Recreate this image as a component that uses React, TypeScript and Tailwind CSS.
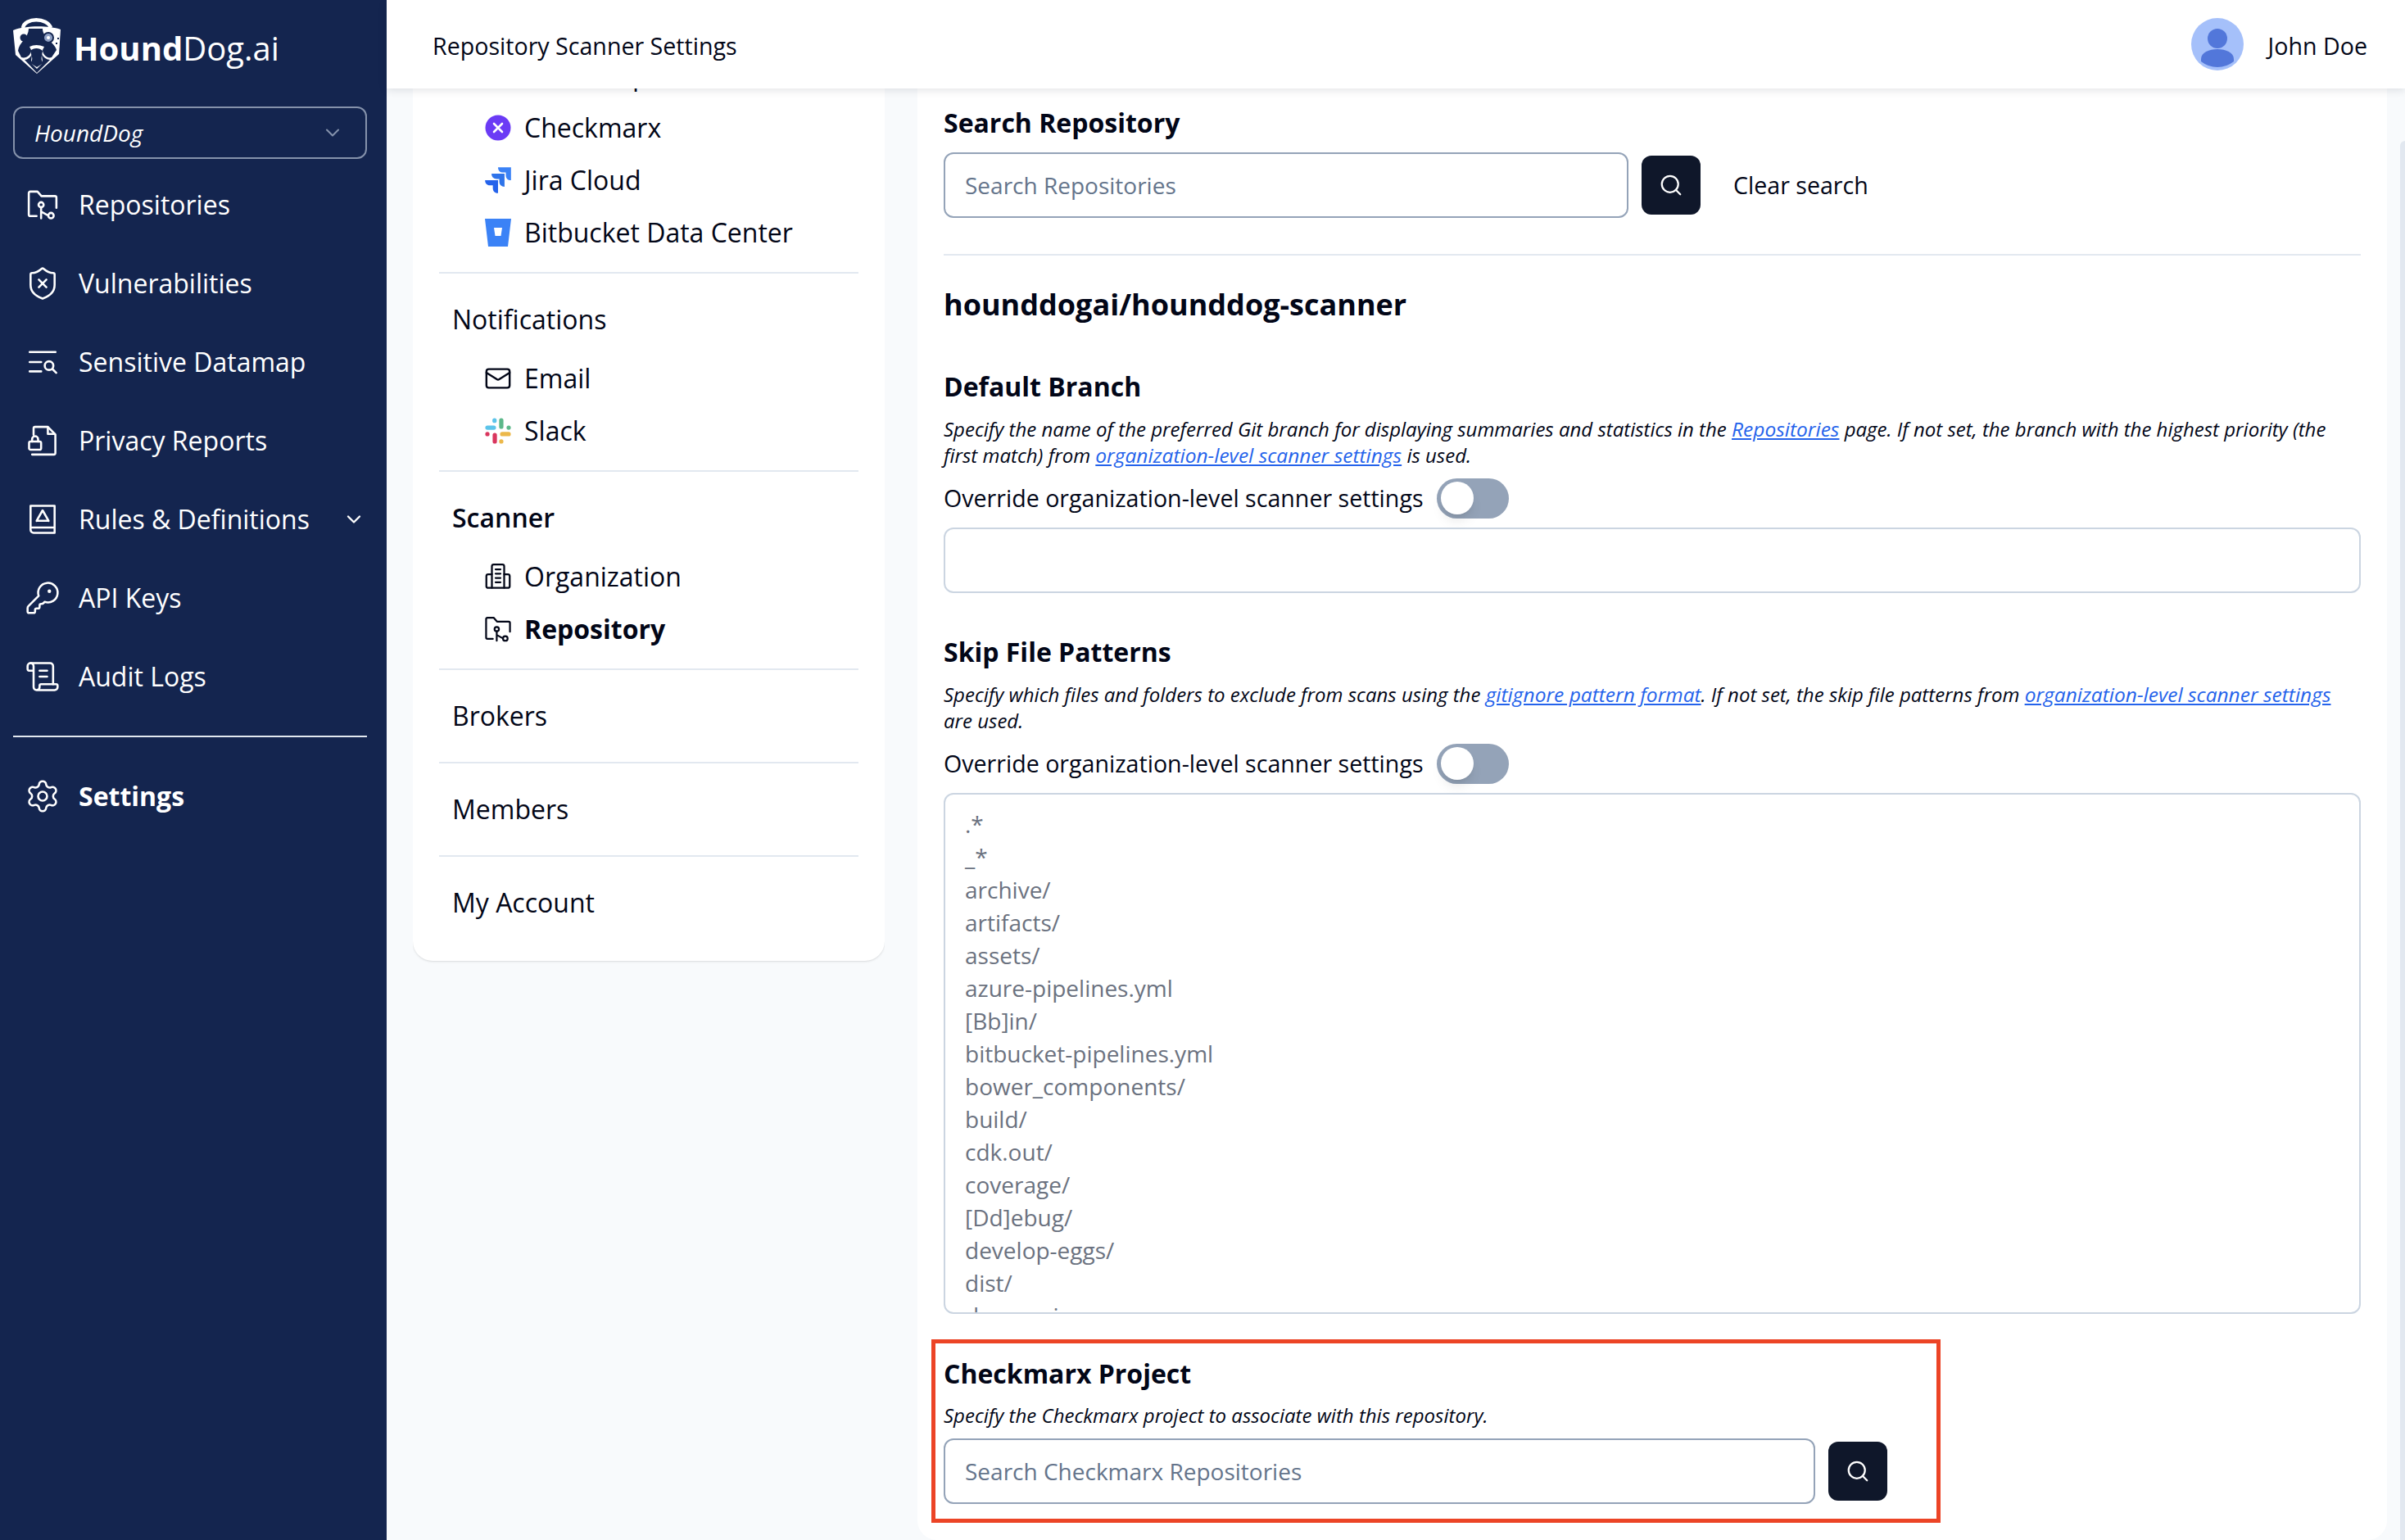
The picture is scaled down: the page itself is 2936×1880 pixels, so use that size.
import { ChevronDown, KeyRound, Mail, ScrollText, Search, Settings, ShieldX } from 'lucide-react'
import type { ReactNode } from 'react'

const SKIP_PATTERNS = [
  '.*', '_*', 'archive/', 'artifacts/', 'assets/', 'azure-pipelines.yml', '[Bb]in/',
  'bitbucket-pipelines.yml', 'bower_components/', 'build/', 'cdk.out/', 'coverage/',
  '[Dd]ebug/', 'develop-eggs/', 'dist/', 'dummy.json',
]

function Logo() {
  return (
    <svg width="60" height="78" viewBox="0 0 60 78" fill="none">
      <path d="M13 14C15 1 43 1 47 14" stroke="white" strokeWidth="4.5" />
      <path d="M1 17C16 11 44 11 59 16L57 46L30 70L4 47Z" fill="white" />
      <path d="M20 15H37C37 26 52 32 54 41L48 50C42 52 37 46 37 41L39 37Q29 33 21 37L23 41C23 47 17 52 11 50L7 42C8 32 20 26 20 15Z" fill="#14254f" />
      <path d="M22 42C26 38 33 38 37 42C36 50 34 52 38 57L30 62L22 57C26 52 24 50 22 42Z" fill="#14254f" />
      <path d="M15 53C19 53 22 50 24 46C24 51 22 54 24 58L30 64L36 58C38 54 36 51 36 46C38 50 42 53 46 53L30 69Z" fill="#14254f" />
      <circle cx="14" cy="26" r="4.5" fill="#14254f" />
      <circle cx="44" cy="26" r="6" fill="#8fa0c4" stroke="#14254f" strokeWidth="2" />
      <circle cx="44" cy="26" r="2" fill="white" />
      <rect x="55" y="26" width="2" height="2" fill="#14254f" />
      <rect x="53" y="32" width="2" height="2" fill="#14254f" />
    </svg>
  )
}

function FolderKeyIcon({ size }: { size: number }) {
  return (
    <svg className="shrink-0" width={size} height={size} viewBox="0 0 24 24" fill="none" stroke="currentColor" strokeWidth="1.4" strokeLinecap="round" strokeLinejoin="round">
      <path d="M8 19.500H3.800a1 1 0 0 1-1-1V4.200a1 1 0 0 1 1-1h4.800l2.600 3h9a1 1 0 0 1 1 1V14" />
      <circle cx="11" cy="12" r="1.700" />
      <path d="M11 13.700V21M11 16.500l4 2.200" />
      <circle cx="17.600" cy="19.200" r="1.800" />
    </svg>
  )
}

function DatamapIcon({ size }: { size: number }) {
  return (
    <svg className="shrink-0" width={size} height={size} viewBox="0 0 24 24" fill="none" stroke="currentColor" strokeWidth="1.500" strokeLinecap="round">
      <path d="M3 5h18M3 12h8M3 18.500h8" />
      <circle cx="16.500" cy="14.500" r="3" />
      <path d="M19 17l2.500 2.500" />
    </svg>
  )
}

function FileLockIcon({ size }: { size: number }) {
  return (
    <svg className="shrink-0" width={size} height={size} viewBox="0 0 24 24" fill="none" stroke="currentColor" strokeWidth="1.400" strokeLinecap="round" strokeLinejoin="round">
      <path d="M6 8V3.800a1 1 0 0 1 1-1h8.500l5 5v12.400a1 1 0 0 1-1 1H5" />
      <path d="M15.500 3v4.500H20" />
      <rect x="3" y="12.500" width="8" height="5.500" rx="1" />
      <path d="M5 12.500v-1.500a2 2 0 0 1 4 0v1.500" />
    </svg>
  )
}

function BookIcon({ size }: { size: number }) {
  return (
    <svg className="shrink-0" width={size} height={size} viewBox="0 0 24 24" fill="none" stroke="currentColor" strokeWidth="1.400" strokeLinecap="round" strokeLinejoin="round">
      <path d="M4 19V3h16v18H6a2 2 0 0 1-2-2ZM4.500 17.500H20" />
      <path d="M8 13l4-7 4 7M9 13h6" />
    </svg>
  )
}

function BuildingIcon({ size }: { size: number }) {
  return (
    <svg className="shrink-0" width={size} height={size} viewBox="0 0 24 24" fill="none" stroke="currentColor" strokeWidth="1.500" strokeLinecap="round" strokeLinejoin="round">
      <path d="M7 21V3.500A1.500 1.500 0 0 1 8.500 2h7A1.500 1.500 0 0 1 17 3.500V21" />
      <path d="M7 10H4a1.500 1.500 0 0 0-1.500 1.500V20A1.200 1.200 0 0 0 4 21h16a1.200 1.200 0 0 0 1.500-1v-8.500A1.500 1.500 0 0 0 20 10h-3" />
      <path d="M10 6h4M10 9.500h4M10 13h4M10 16.500h4" />
    </svg>
  )
}

function CheckmarxIcon() {
  return (
    <svg className="shrink-0" width="32" height="32" viewBox="0 0 32 32">
      <circle cx="16" cy="16" r="15.500" fill="#6b3bf5" />
      <path d="M11 11l10 10M21 11l-10 10" stroke="white" strokeWidth="2.600" strokeLinecap="round" />
    </svg>
  )
}

function JiraIcon() {
  const blade = 'M12 2h10v10c-2.500 0-4-1.500-4-4V6h-2c-2.500 0-4-1.500-4-4z'
  return (
    <svg className="shrink-0" width="38" height="38" viewBox="0 0 24 24">
      <path d={blade} fill="#3b82f6" />
      <path d={blade} fill="#2f74ea" transform="translate(-5 5)" />
      <path d={blade} fill="#2563eb" transform="translate(-10 10)" />
    </svg>
  )
}

function BitbucketIcon() {
  return (
    <svg className="shrink-0" width="32" height="34" viewBox="0 0 32 34">
      <path fillRule="evenodd" d="M0 0H32L28 34H4ZM11 11l1.500 10h7L21 11Z" fill="#3b82f6" />
    </svg>
  )
}

function SlackIcon() {
  return (
    <svg className="shrink-0" width="38" height="38" viewBox="0 0 24 24" fill="none" strokeWidth="3.300" strokeLinecap="round">
      <g stroke="#5cc4ea"><path d="M3.800 9.500h5M9.300 3.800v.4" /></g>
      <g stroke="#5cb88a"><path d="M14.500 3.800v5M20.200 9.500h.01" /></g>
      <g stroke="#ecb84a"><path d="M15.200 14.500h5M14.500 20.200v.01" /></g>
      <g stroke="#d9365e"><path d="M9.500 15.200v5M3.800 14.500h.01" /></g>
    </svg>
  )
}

function SideItem({ icon, label, bold, chevron }: { icon: ReactNode; label: string; bold?: boolean; chevron?: boolean }) {
  return (
    <div className="flex h-[96px] items-center pl-[32px] pr-[26px]">
      <span className="flex w-[40px] justify-center text-white">{icon}</span>
      <span className={`ml-[24px] text-[32px] text-white ${bold ? 'font-bold' : ''}`}>{label}</span>
      {chevron && <ChevronDown size={28} strokeWidth={2} className="ml-auto text-white" />}
    </div>
  )
}

function NavLink({ icon, label, bold }: { icon: ReactNode; label: string; bold?: boolean }) {
  return (
    <div className="flex h-[64px] items-center pl-[88px]">
      <span className="flex w-[32px] justify-center text-[#020617]">{icon}</span>
      <span className={`ml-[16px] text-[32px] ${bold ? 'font-bold' : ''}`}>{label}</span>
    </div>
  )
}

function NavDivider() {
  return <div className="mx-[32px] h-[2px] bg-[#e2e8f0]" />
}

function NavLabel({ label, bold }: { label: string; bold?: boolean }) {
  return <div className={`flex h-[48px] items-center pl-[48px] text-[32px] ${bold ? 'font-semibold' : ''}`}>{label}</div>
}

function SettingsNav() {
  return (
    <div className="-mt-[48px] w-[576px] rounded-[24px] bg-white pb-[47px] text-[#020617] shadow-sm">
      <NavLink icon={<span className="h-[32px] w-[32px] rounded-full bg-[#2563eb]" />} label="Azure Repos" />
      <NavLink icon={<CheckmarxIcon />} label="Checkmarx" />
      <NavLink icon={<JiraIcon />} label="Jira Cloud" />
      <NavLink icon={<BitbucketIcon />} label="Bitbucket Data Center" />
      <div className="h-[16px]" />
      <NavDivider />
      <div className="pt-[32px]">
        <NavLabel label="Notifications" />
        <div className="h-[16px]" />
        <NavLink icon={<Mail size={34} strokeWidth={1.7} className="shrink-0" />} label="Email" />
        <NavLink icon={<SlackIcon />} label="Slack" />
      </div>
      <div className="h-[16px]" />
      <NavDivider />
      <div className="pt-[32px]">
        <NavLabel label="Scanner" bold />
        <div className="h-[16px]" />
        <NavLink icon={<BuildingIcon size={36} />} label="Organization" />
        <NavLink icon={<FolderKeyIcon size={38} />} label="Repository" bold />
      </div>
      <div className="h-[16px]" />
      <NavDivider />
      <div className="py-[32px]"><NavLabel label="Brokers" /></div>
      <NavDivider />
      <div className="py-[32px]"><NavLabel label="Members" /></div>
      <NavDivider />
      <div className="pt-[32px]"><NavLabel label="My Account" /></div>
    </div>
  )
}

function SearchButton() {
  return (
    <button className="flex h-[72px] w-[72px] shrink-0 items-center justify-center rounded-[12px] bg-[#0f172a] text-white">
      <Search size={30} strokeWidth={1.8} />
    </button>
  )
}

function Toggle() {
  return (
    <span className="relative ml-[16px] flex h-[49px] w-[88px] items-center rounded-full bg-[#94a3b8] pl-[5px]">
      <span className="h-[40px] w-[40px] rounded-full bg-white shadow-lg" />
    </span>
  )
}

function OverrideRow() {
  return (
    <div className="mt-[10px] flex h-[52px] items-center text-[28.6px]">
      Override organization-level scanner settings
      <Toggle />
    </div>
  )
}

function SectionTitle({ children }: { children: ReactNode }) {
  return <h3 className="flex h-[48px] items-center text-[32px] font-bold">{children}</h3>
}

function TextLink({ children }: { children: ReactNode }) {
  return <a className="text-[24.5px] text-[#2563eb] underline">{children}</a>
}

function RepoSettings() {
  return (
    <div className="relative h-full w-[1794px] rounded-b-[24px] bg-white px-[32px] pt-[18px] text-[#020617]">
      <SectionTitle>Search Repository</SectionTitle>
      <div className="mt-[12px] flex items-center">
        <div className="flex h-[80px] w-[836px] items-center rounded-[12px] border-2 border-[#94a3b8] px-[24px] text-[28px] text-[#64748b]">Search Repositories</div>
        <span className="ml-[16px]"><SearchButton /></span>
        <span className="ml-[40px] text-[28.6px]">Clear search</span>
      </div>
      <div className="mt-[44px] h-[2px] bg-[#e2e8f0]" />
      <h2 className="mt-[36px] flex h-[48px] items-center text-[36px] font-bold">hounddogai/hounddog-scanner</h2>
      <div className="mt-[52px]"><SectionTitle>Default Branch</SectionTitle></div>
      <p className="mt-[12px] text-[24px] italic leading-[32px]">
        Specify the name of the preferred Git branch for displaying summaries and statistics in the <TextLink>Repositories</TextLink> page. If not set, the branch with the highest priority (the<br />
        first match) from <TextLink>organization-level scanner settings</TextLink> is used.
      </p>
      <OverrideRow />
      <div className="mt-[10px] h-[80px] rounded-[12px] border-2 border-[#cbd5e1]" />
      <div className="mt-[48px]"><SectionTitle>Skip File Patterns</SectionTitle></div>
      <p className="mt-[12px] text-[24px] italic leading-[32px]">
        Specify which files and folders to exclude from scans using the <TextLink>gitignore pattern format</TextLink>. If not set, the skip file patterns from <TextLink>organization-level scanner settings</TextLink><br />
        are used.
      </p>
      <OverrideRow />
      <div className="mt-[10px] h-[636px] overflow-hidden rounded-[12px] border-2 border-[#cbd5e1] px-[24px] pt-[16px] text-[28px] leading-[40px] text-[#6b7280]">
        {SKIP_PATTERNS.map(line => <div key={line}>{line}</div>)}
      </div>
      <div className="mt-[49px]"><SectionTitle>Checkmarx Project</SectionTitle></div>
      <p className="mt-[11px] text-[24px] italic leading-[32px]">Specify the Checkmarx project to associate with this repository.</p>
      <div className="mt-[12px] flex items-center">
        <div className="flex h-[80px] w-[1064px] items-center rounded-[12px] border-2 border-[#94a3b8] px-[24px] text-[28px] text-[#64748b]">Search Checkmarx Repositories</div>
        <span className="ml-[16px]"><SearchButton /></span>
      </div>
      {/* red annotation drawn over the screenshot */}
      <div className="absolute left-[17px] top-[1527px] h-[224px] w-[1232px] border-[5px] border-[#ec4426]" />
    </div>
  )
}

export default function App() {
  return (
    <div className="flex h-[1880px] w-[2936px] overflow-hidden bg-[#f8fafc] font-['Open_Sans',sans-serif]">
      <aside className="h-full w-[472px] shrink-0 bg-[#14254f]">
        <div className="flex h-[130px] items-center pb-[12px] pl-[15px]">
          <Logo />
          <span className="ml-[15px] text-[40px] text-white"><b>Hound</b>Dog.ai</span>
        </div>
        <div className="ml-[16px] flex h-[64px] w-[432px] items-center justify-between rounded-[12px] border-2 border-[#8592ab] pl-[24px] pr-[26px] text-[28px] italic text-white">
          HoundDog
          <ChevronDown size={28} strokeWidth={1.8} className="text-[#8592ab]" />
        </div>
        <div className="mt-[8px]">
          <SideItem icon={<FolderKeyIcon size={44} />} label="Repositories" />
          <SideItem icon={<ShieldX size={44} strokeWidth={1.4} className="shrink-0" />} label="Vulnerabilities" />
          <SideItem icon={<DatamapIcon size={42} />} label="Sensitive Datamap" />
          <SideItem icon={<FileLockIcon size={44} />} label="Privacy Reports" />
          <SideItem icon={<BookIcon size={44} />} label="Rules &amp; Definitions" chevron />
          <SideItem icon={<KeyRound size={44} strokeWidth={1.4} className="shrink-0" />} label="API Keys" />
          <SideItem icon={<ScrollText size={44} strokeWidth={1.4} className="shrink-0" />} label="Audit Logs" />
        </div>
        <div className="ml-[16px] mr-[24px] mt-[24px] h-[2px] bg-[#e2e8f0]" />
        <div className="mt-[24px]">
          <SideItem icon={<Settings size={44} strokeWidth={1.4} className="shrink-0" />} label="Settings" bold />
        </div>
      </aside>
      <div className="flex h-full min-w-0 flex-1 flex-col">
        <header className="relative z-10 flex h-[108px] shrink-0 items-center bg-white pl-[56px] pr-[46px] pt-[4px] text-[28.6px] text-[#020617] shadow-[0_2px_10px_rgba(15,23,42,0.12)]">
          <span>Repository Scanner Settings</span>
          <svg className="ml-auto -translate-y-[2px]" width="64" height="64" viewBox="0 0 64 64">
            <circle cx="32" cy="32" r="32" fill="#a5c0fa" />
            <circle cx="32" cy="25" r="12" fill="#5277da" />
            <path d="M12 50C12 34 52 34 52 50V53A32 32 0 0 1 12 53Z" fill="#5277da" />
          </svg>
          <span className="ml-[30px]">John Doe</span>
        </header>
        <div className="flex min-h-0 flex-1">
          <div className="ml-[32px] h-full w-[576px] shrink-0 overflow-hidden"><SettingsNav /></div>
          <div className="ml-[40px]"><RepoSettings /></div>
          <div className="ml-[16px] mt-[64px] w-[6px] rounded-tl-[6px] bg-[#e2e8f0]" />
        </div>
      </div>
    </div>
  )
}
